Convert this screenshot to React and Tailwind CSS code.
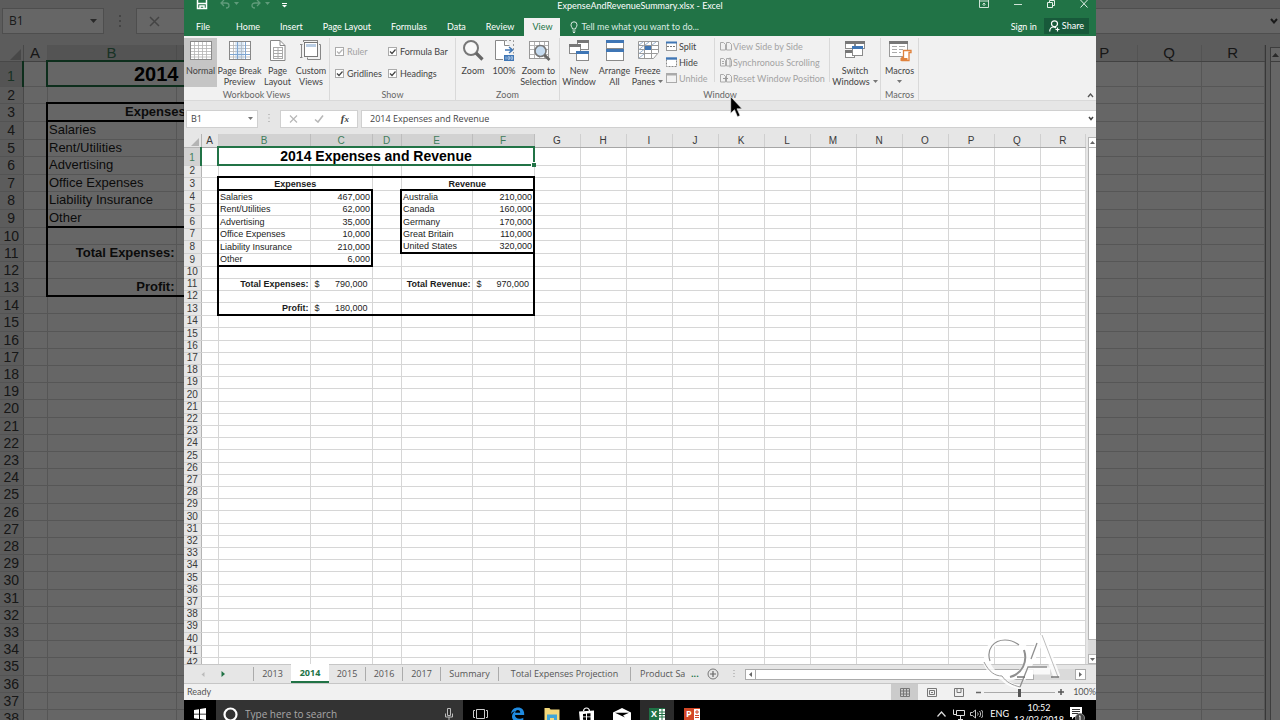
import React from "react";

const SIZES = {
  sm: {
    head: "h-[13px] text-[10px] leading-[11px]",
    corner: "size-2",
    title: "h-[18px] text-[14px] leading-[14px]",
    row: "h-[12px] text-[9px] leading-[10px]",
    tallRow: "h-[13px] text-[9px] leading-[10px]",
    num: "text-[10px]",
  },
  lg: {
    head: "h-[16px] text-[15px] leading-[14px]",
    corner: "size-[11px]",
    title: "h-[25px] text-[20px] leading-[20px]",
    row: "h-[17px] text-[13px] leading-[14px]",
    tallRow: "h-[18px] text-[13px] leading-[14px]",
    num: "text-[14px]",
  },
};

const EXPENSES = [
  ["Salaries", "467,000"],
  ["Rent/Utilities", "62,000"],
  ["Advertising", "35,000"],
  ["Office Expenses", "10,000"],
  ["Liability Insurance", "210,000"],
  ["Other", "6,000"],
];
const REVENUE = [
  ["Australia", "210,000"],
  ["Canada", "160,000"],
  ["Germany", "170,000"],
  ["Great Britain", "110,000"],
  ["United States", "320,000"],
];

const TALL_ROWS = [3, 4, 6, 8, 9, 13];
const isTall = (r) => TALL_ROWS.includes(r) || (r > 13 && r % 5 === 0);

const right = (r, c) => {
  if (c === "A" && r >= 3 && r <= 13) return "border-r-2 border-r-black";
  if (c === "C" && r >= 4 && r <= 9) return "border-r-2 border-r-black";
  if (c === "D" && r >= 4 && r <= 8) return "border-r-2 border-r-black";
  if (c === "F" && r >= 3 && r <= 13) return "border-r-2 border-r-black";
  return "border-r border-r-[#d6d6d6]";
};
const bottom = (r, c) => {
  const inBox = "BCDEF".includes(c);
  if (inBox && (r === 2 || r === 13)) return "border-b-2 border-b-black";
  if (inBox && c !== "D" && r === 3) return "border-b-2 border-b-black";
  if ("BC".includes(c) && r === 9) return "border-b-2 border-b-black";
  if ("EF".includes(c) && r === 8) return "border-b-2 border-b-black";
  return "border-b border-b-[#d6d6d6]";
};

function Money({ value }) {
  return (
    <span className="flex justify-between pl-1 pr-[3px]">
      <span>$</span>
      <span>{value}</span>
    </span>
  );
}

function cellContent(r, c) {
  const i = r - 4;
  if (i >= 0 && i < 6 && c === "B") return EXPENSES[i][0];
  if (i >= 0 && i < 6 && c === "C") return EXPENSES[i][1];
  if (i >= 0 && i < 5 && c === "E") return REVENUE[i][0];
  if (i >= 0 && i < 5 && c === "F") return REVENUE[i][1];
  if (r === 11 && c === "B") return "Total Expenses:";
  if (r === 11 && c === "C") return <Money value="790,000" />;
  if (r === 11 && c === "E") return "Total Revenue:";
  if (r === 11 && c === "F") return <Money value="970,000" />;
  if (r === 13 && c === "B") return "Profit:";
  if (r === 13 && c === "C") return <Money value="180,000" />;
  return null;
}

/* `edge` draws only the columns up to a sliver of C, as cut by the window in front. */
function Sheet({ size, cols, widths, rows, rowNumbers = true, edge = false }) {
  const s = SIZES[size];
  const list = cols.split("");
  return (
    <table className="w-full table-fixed border-collapse font-['Liberation_Sans',Arial,sans-serif] text-[#1c1c1c]">
      <colgroup>
        {widths.map((w, i) => (
          <col key={i} className={w} />
        ))}
      </colgroup>
      <thead>
        <tr className={s.head}>
          {rowNumbers && (
            <th className="border-b border-r border-[#b4b4b4] p-0 align-bottom">
              <svg viewBox="0 0 10 10" className={`mr-[2px] mb-px ml-auto ${s.corner}`}>
                <path d="M10 0V10H0Z" fill="#b4b4b4" />
              </svg>
            </th>
          )}
          {list.map((c) => (
            <th
              key={c}
              className={`border-b border-r p-0 font-normal ${
                "BCDEF".includes(c)
                  ? "border-b-[#217346] border-r-[#bdbdbd] bg-[#d2d2d2] text-[#3f7d5c]"
                  : "border-b-[#a6a6a6] border-r-[#cfcfcf] text-[#3a3a3a]"
              } ${c === "P" && !rowNumbers ? "pr-6" : ""}`}
            >
              {edge && c === "C" ? "" : c}
            </th>
          ))}
        </tr>
      </thead>
      <tbody className="bg-white">
        {Array.from({ length: rows }, (_, k) => k + 1).map((r) => (
          <tr key={r} className={r === 1 ? s.title : isTall(r) ? s.tallRow : s.row}>
            {rowNumbers && (
              <th
                className={`border-b border-b-[#cfcfcf] p-0 text-center font-normal ${s.num} ${
                  r === 1
                    ? "border-r-2 border-r-[#217346] bg-[#d2d2d2] align-bottom text-[#3f7d5c]"
                    : "border-r border-r-[#b4b4b4] bg-[#e6e6e6] text-[#3a3a3a]"
                }`}
              >
                {r}
              </th>
            )}
            {list.map((c) => {
              if (r === 1 && c === "B")
                return edge ? (
                  <td key={c} colSpan={2} className="border-2 border-r-0 border-[#217346] p-0 pr-[5px] text-right font-bold text-black">
                    2014
                  </td>
                ) : (
                  <td key={c} colSpan={5} className="relative border-2 border-[#217346] p-0 text-center font-bold whitespace-nowrap text-black">
                    2014 Expenses and Revenue
                    <span className="absolute -right-[3px] -bottom-[3px] size-[5px] border-t border-l border-white bg-[#217346]" />
                  </td>
                );
              if (r === 1 && "CDEF".includes(c)) return null;
              if (r === 3 && (c === "B" || c === "E"))
                return (
                  <td
                    key={c}
                    colSpan={2}
                    className={`p-0 font-bold ${edge ? "pl-[77px] text-left" : "text-center"} ${right(3, c === "E" ? "F" : "B")} ${bottom(3, c)}`}
                  >
                    {c === "B" ? "Expenses" : "Revenue"}
                  </td>
                );
              if (r === 3 && (c === "C" || c === "F")) return null;
              const total = r > 10;
              const align = total && "BE".includes(c) ? "text-right font-bold pr-px" : "CF".includes(c) ? "text-right pr-px" : "pl-px text-left";
              return (
                <td key={c} className={`p-0 whitespace-nowrap ${align} ${edge && c === "C" ? "" : right(r, c)} ${bottom(r, c)}`}>
                  {edge && c === "C" ? null : cellContent(r, c)}
                </td>
              );
            })}
          </tr>
        ))}
      </tbody>
    </table>
  );
}

/* ---------- icons ---------- */

const Svg = ({ w = 24, h = 22, className = "", children, vb }) => (
  <svg width={w} height={h} viewBox={vb || `0 0 ${w} ${h}`} className={`shrink-0 ${className}`} fill="none" aria-hidden="true">
    {children}
  </svg>
);

const NormalIcon = ({ brk }) => (
  <Svg>
    <rect x="1.5" y="1.5" width="21" height="18" fill="#fff" stroke="#888" />
    <path d="M5.500 2v17M9.500 2v17M13.500 2v17M17.500 2v17M2 5.500h20M2 8.500h20M2 11.500h20M2 14.500h20M2 17h20" stroke="#b4b4b4" strokeWidth="0.800" />
    {brk && (
      <>
        <rect x="7" y="2" width="9" height="17" fill="#9fc0e2" opacity="0.350" />
        <path d="M9.500 2v17M17.500 2v17M2 14.500h20" stroke="#7ea6d2" />
      </>
    )}
  </Svg>
);
const PageLayoutIcon = () => (
  <Svg>
    <path d="M4.500 .5H14l5 5v15h-14.500z" fill="#fff" stroke="#888" />
    <path d="M14 .5v5h5" stroke="#888" />
    <path d="M7 7.500h10M7 10.500h10M7 13.500h10M7 16.500h10M7 18.500h10M7.500 7v12M12 7v12M16.500 7v12" stroke="#aaa" />
  </Svg>
);
const CustomViewsIcon = () => (
  <Svg>
    <path d="M4 .5h14M4.500 0v2M18.500 0v2M2.500 4v14M1 4.500h2.500M1 17.500h2.500M20 4.500h1.500v15h-13v-2" stroke="#888" />
    <rect x="5.500" y="2.500" width="13" height="14" fill="#fff" stroke="#777" />
    <rect x="7" y="4" width="10" height="3" fill="#b9cde4" />
  </Svg>
);
const ZoomIcon = () => (
  <Svg>
    <circle cx="10" cy="8" r="7" fill="#f8f8f8" stroke="#777" strokeWidth="2" />
    <path d="M15 13l6.500 6.500" stroke="#666" strokeWidth="3.200" />
  </Svg>
);
const HundredIcon = () => (
  <Svg>
    <path d="M3.500 .5h9l5 5v11H12v3H3.500z" fill="#fff" />
    <path d="M11 19.500H3.500V.5h9" stroke="#888" />
    <path d="M12.500 .5v5h5" stroke="#888" />
    <path d="M13 .5h8.500v13" stroke="#999" strokeDasharray="2 2" />
    <path d="M13 10h7M17 7l3.500 3-3.500 3" stroke="#3f76b5" strokeWidth="1.500" />
    <rect x="12" y="15" width="10" height="6" fill="#3f76b5" />
    <path d="M14 16.500v3M16 16.700h1.600v2.600H16zM19 16.700h1.600v2.600H19z" stroke="#cfe0f2" strokeWidth="0.700" />
  </Svg>
);
const ZoomSelIcon = () => (
  <Svg>
    <rect x="2.500" y="1.500" width="19" height="17" fill="#fff" stroke="#999" />
    <path d="M7.500 2v16M12.500 2v16M17.500 2v16M3 5.500h18M3 9.500h18M3 14.500h18" stroke="#b4b4b4" />
    <circle cx="13.500" cy="11" r="5.500" fill="#c5dbf0" stroke="#777" strokeWidth="1.600" />
    <path d="M17.500 15l5 5" stroke="#666" strokeWidth="2.600" />
  </Svg>
);
const MiniWin = ({ x, y, w, h, c }) => (
  <>
    <rect x={x + 0.5} y={y + 0.5} width={w} height={h} fill="#fff" stroke="#8a8a8a" />
    <rect x={x} y={y} width={w + 1} height="3" fill={c} />
  </>
);
const NewWindowIcon = () => (
  <Svg>
    <MiniWin x={10} y={0} w={11} h={9} c="#777" />
    <MiniWin x={2} y={4} w={11} h={9} c="#777" />
    <MiniWin x={9} y={11} w={12} h={9} c="#3f76b5" />
  </Svg>
);
const ArrangeIcon = () => (
  <Svg>
    <MiniWin x={3} y={0} w={17} h={8} c="#3f76b5" />
    <MiniWin x={3} y={9} w={17} h={11} c="#3f76b5" />
  </Svg>
);
const FreezeIcon = () => (
  <Svg>
    <path d="M2.500 1.500h20v11l-5 6h-15z" fill="#fff" stroke="#999" />
    <path d="M8.500 1v17M15.500 1v17M3 5.500h19M3 9.500h19M3 13.500h18" stroke="#999" />
    <path d="M3 5l4-3M9 5l4-3M16 5l4-3M3 9.500l5-4M3 13.500l5-4M3 18l5-4" stroke="#9bb3cf" />
    <rect x="9" y="6" width="6" height="4" fill="#3f76b5" />
  </Svg>
);
const SwitchIcon = () => (
  <Svg>
    <MiniWin x={2} y={1} w={9} h={7} c="#777" />
    <MiniWin x={12} y={1} w={9} h={7} c="#777" />
    <MiniWin x={2} y={10} w={9} h={7} c="#777" />
    <MiniWin x={9} y={6} w={10} h={9} c="#3f76b5" />
  </Svg>
);
const MacrosIcon = () => (
  <Svg>
    <rect x="1.500" y="1.500" width="18" height="15" fill="#fff" stroke="#999" />
    <rect x="1" y="1" width="19" height="3" fill="#777" />
    <path d="M4 6.500h5M11 6.500h6M4 9.500h5M11 9.500h4M4 12.500h5M11 12.500h2" stroke="#aaa" />
    <path d="M15.500 10.500h7.500v2h-2v8h-7v-3h1.500z" fill="#fff" stroke="#e0823d" strokeWidth="1.300" />
    <path d="M12.500 18h7v3h-7z" fill="#e0823d" />
  </Svg>
);
const SplitIcon = () => (
  <Svg w={12} h={11}>
    <rect x="0.500" y="1.500" width="10" height="8" fill="#fff" stroke="#999" />
    <path d="M0 1.500h11" stroke="#3f76b5" strokeWidth="2" />
    <path d="M1 5.500h9" stroke="#777" strokeDasharray="2 1" />
  </Svg>
);
const HideIcon = () => (
  <Svg w={12} h={11}>
    <rect x="0.500" y="1.500" width="10" height="8" fill="#fff" stroke="#888" strokeDasharray="2 1" />
    <path d="M0 1.500h11" stroke="#3f76b5" strokeWidth="2.400" />
  </Svg>
);
const UnhideIcon = () => (
  <Svg w={12} h={11}>
    <rect x="0.500" y="0.500" width="10" height="9" fill="#f2f2f2" stroke="#aaa" />
    <path d="M0 1.500h11" stroke="#aaa" strokeWidth="2" />
  </Svg>
);
const PairIcon = ({ kind }) => (
  <Svg w={12} h={11}>
    <path d="M.5 1.500h3l2 2v5.500H.5zM6.500 1.500h3l2 2v5.500h-5z" stroke="#aaa" />
    {kind === "sync" && <path d="M2 4.500h2M2 6.500h2M10 .5v10M8.500 2.500L10 1l1.500 1.500" stroke="#aaa" />}
    {kind === "reset" && <path d="M3 5.500h5M6 3.500v4" stroke="#999" />}
  </Svg>
);
const Caret = ({ className = "" }) => (
  <Svg w={5} h={3} className={className}>
    <path d="M0 0h5L2.500 3z" fill="currentColor" />
  </Svg>
);

/* ---------- ribbon ---------- */

function BigButton({ icon, a, b, width, active, caret }) {
  return (
    <button className={`flex h-[49px] shrink-0 flex-col items-center pt-[2px] whitespace-nowrap ${width} ${active ? "bg-[#c5c5c5]" : ""}`}>
      {icon}
      <span className="mt-[3px] leading-[11px]">{a}</span>
      <span className="flex h-[11px] items-center gap-[3px] leading-[11px]">
        {b}
        {caret && <Caret className="text-[#777]" />}
      </span>
    </button>
  );
}

function Group({ label, children }) {
  return (
    <div className="flex shrink-0 flex-col">
      <div className="flex flex-1">{children}</div>
      <div className="text-center leading-[10px] text-[#666]">{label}</div>
    </div>
  );
}
const Divider = ({ tall = true }) => <div className={`w-px shrink-0 bg-[#d9d9d9] ${tall ? "self-stretch" : "h-11"}`} />;

function Check({ label, disabled }) {
  return (
    <label className={`flex h-[11px] items-center gap-[3px] whitespace-nowrap ${disabled ? "text-[#a3a3a3]" : ""}`}>
      <span className="relative flex">
        <input type="checkbox" defaultChecked disabled={disabled} className="size-[9px] appearance-none border border-[#ababab] bg-white" />
        <Svg w={9} h={9} className="pointer-events-none absolute inset-0">
          <path d="M2 4.500l2 2 3.500-4" stroke={disabled ? "#b5b5b5" : "#444"} strokeWidth="1.200" />
        </Svg>
      </span>
      {label}
    </label>
  );
}

const SmallButton = ({ icon, label, disabled }) => (
  <button disabled={disabled} className={`flex h-[11px] items-center gap-px whitespace-nowrap ${disabled ? "text-[#a3a3a3]" : ""}`}>
    {icon}
    {label}
  </button>
);

function Ribbon() {
  return (
    <div className="flex h-[65px] shrink-0 border-b border-[#d9d9d9] bg-[#f1f1f1] pt-[2px] font-['Lato',sans-serif] text-[9px] text-[#444]">
      <Group label="Workbook Views">
        <BigButton width="w-[33px]" icon={<NormalIcon />} a="Normal" active />
        <BigButton width="w-[45px]" icon={<NormalIcon brk />} a="Page Break" b="Preview" />
        <BigButton width="w-[31px]" icon={<PageLayoutIcon />} a="Page" b="Layout" />
        <BigButton width="w-[36px]" icon={<CustomViewsIcon />} a="Custom" b="Views" />
      </Group>
      <Divider />
      <Group label="Show">
        <div className="flex w-[125px] gap-[6px] pt-2 pl-[5px]">
          <div className="flex flex-col gap-[11px]">
            <Check label="Ruler" disabled />
            <Check label="Gridlines" />
          </div>
          <div className="flex flex-col gap-[11px]">
            <Check label="Formula Bar" />
            <Check label="Headings" />
          </div>
        </div>
      </Group>
      <Divider />
      <Group label="Zoom">
        <BigButton width="w-[34px]" icon={<ZoomIcon />} a="Zoom" />
        <BigButton width="w-[28px]" icon={<HundredIcon />} a="100%" />
        <BigButton width="w-[41px]" icon={<ZoomSelIcon />} a="Zoom to" b="Selection" />
      </Group>
      <Divider />
      <Group label="Window">
        <BigButton width="w-[38px]" icon={<NewWindowIcon />} a="New" b="Window" />
        <BigButton width="w-[33px]" icon={<ArrangeIcon />} a="Arrange" b="All" />
        <BigButton width="w-[33px]" icon={<FreezeIcon />} a="Freeze" b="Panes" caret />
        <div className="flex w-[50px] flex-col gap-[5px] pt-[3px] pl-[2px]">
          <SmallButton icon={<SplitIcon />} label="Split" />
          <SmallButton icon={<HideIcon />} label="Hide" />
          <SmallButton icon={<UnhideIcon />} label="Unhide" disabled />
        </div>
        <Divider tall={false} />
        <div className="flex w-[114px] flex-col gap-[5px] pt-[3px] pl-[5px]">
          <SmallButton icon={<PairIcon />} label="View Side by Side" disabled />
          <SmallButton icon={<PairIcon kind="sync" />} label="Synchronous Scrolling" disabled />
          <SmallButton icon={<PairIcon kind="reset" />} label="Reset Window Position" disabled />
        </div>
        <Divider tall={false} />
        <BigButton width="w-[50px]" icon={<SwitchIcon />} a="Switch" b="Windows" caret />
      </Group>
      <Divider />
      <Group label="Macros">
        <BigButton width="w-[37px]" icon={<MacrosIcon />} a="Macros" caret />
      </Group>
      <Divider />
      <button aria-label="Collapse ribbon" className="mt-auto mr-[2px] mb-[2px] ml-auto">
        <Svg w={7} h={5}>
          <path d="M1 4l2.500-3L6 4" stroke="#555" strokeWidth="1.300" />
        </Svg>
      </button>
    </div>
  );
}

function TitleBar() {
  return (
    <div className="grid h-[18px] shrink-0 grid-cols-[1fr_auto_1fr] items-start overflow-hidden">
      <div className="flex items-start gap-3 pl-3">
        <button aria-label="Save">
          <Svg w={12} h={10}>
            <path d="M1.500 0v8.500h9V0M1 3.500h10M4 8.500V6h4v2.500" stroke="#fff" strokeWidth="1.500" />
          </Svg>
        </button>
        <button aria-label="Undo" className="flex items-start gap-1 text-[#5f9b7a]">
          <Svg w={10} h={9}>
            <path d="M4 0L1 3l3 3M1 3h5c4 0 4 5 0 5" stroke="currentColor" strokeWidth="1.300" />
          </Svg>
          <Caret className="mt-[2px]" />
        </button>
        <button aria-label="Redo" className="flex items-start gap-1 text-[#5f9b7a]">
          <Svg w={10} h={9}>
            <path d="M6 0l3 3-3 3M9 3H4C0 3 0 8 4 8" stroke="currentColor" strokeWidth="1.300" />
          </Svg>
          <Caret className="mt-[2px]" />
        </button>
        <button aria-label="Customize toolbar" className="text-white">
          <Svg w={5} h={8}>
            <path d="M0 3.500h5" stroke="#fff" />
            <path d="M0 5h5L2.500 7.500z" fill="#fff" />
          </Svg>
        </button>
      </div>
      <div className="text-center leading-3">ExpenseAndRevenueSummary.xlsx - Excel</div>
      <div className="flex items-start justify-end gap-[25px] pr-2">
        <button aria-label="Ribbon display options">
          <Svg w={10} h={8}>
            <path d="M.5 0v7.500h9V0M0 1h10M5 6V3M3.500 4.500L5 3l1.500 1.500" stroke="#cfe3d7" />
          </Svg>
        </button>
        <button aria-label="Minimize">
          <Svg w={8} h={8}>
            <path d="M0 4.500h8" stroke="#cfe3d7" />
          </Svg>
        </button>
        <button aria-label="Restore">
          <Svg w={8} h={8}>
            <path d="M.5 2.500h5v5h-5zM2.500 2V.5h5v5H6" stroke="#e4f0e9" />
          </Svg>
        </button>
        <button aria-label="Close">
          <Svg w={8} h={8}>
            <path d="M.5 0l7 7.500M7.500 0l-7 7.500" stroke="#e4f0e9" />
          </Svg>
        </button>
      </div>
    </div>
  );
}

const RIBBON_TABS = ["File", "Home", "Insert", "Page Layout", "Formulas", "Data", "Review", "View"];

function TabBar() {
  return (
    <div className="flex h-[18px] shrink-0 items-stretch">
      {RIBBON_TABS.map((t, i) => (
        <button
          key={t}
          className={
            t === "View"
              ? "bg-[#f1f1f1] px-2 text-[#217346]"
              : i === 0
                ? "pr-4 pl-3 whitespace-nowrap"
                : "px-[10px] whitespace-nowrap"
          }
        >
          {t}
        </button>
      ))}
      <button className="ml-[10px] flex items-center gap-[3px] text-[#dcebe2]">
        <Svg w={8} h={12}>
          <path d="M2.500 8C2.500 6.500 1 6 1 3.800a3 3 0 0 1 6 0C7 6 5.500 6.500 5.500 8zM2.500 10h3M3 11.500h2" stroke="currentColor" />
        </Svg>
        Tell me what you want to do...
      </button>
      <button className="ml-auto pr-[7px]">Sign in</button>
      <button className="mr-[7px] mb-[2px] flex items-center gap-[2px] bg-[#17593a] px-[5px]">
        <Svg w={11} h={12}>
          <circle cx="5.500" cy="3.800" r="3" stroke="#fff" strokeWidth="1.200" />
          <path d="M.7 11.500C.7 8.500 2.500 7 4.500 7c1 0 2 .5 2.500 1M8.500 7.500v4M6.500 9.500h4" stroke="#fff" strokeWidth="1.200" />
        </Svg>
        Share
      </button>
    </div>
  );
}

function FormulaBar() {
  return (
    <div className="flex h-[33px] shrink-0 items-center bg-[#e6e6e6] pt-[2px] pl-[2px] font-['Open_Sans',sans-serif] text-[9px] text-[#444]">
      <div className="flex h-[18px] w-[72px] items-center border border-[#d0d0d0] bg-white pr-1 pl-1 text-[#777]">
        <input aria-label="Name box" defaultValue="B1" className="w-0 flex-1 bg-transparent text-[#444] outline-none" />
        <Caret />
      </div>
      <Svg w={2} h={10} className="mx-[10px]">
        <path d="M1 0v10" stroke="#999" strokeDasharray="1 2.500" />
      </Svg>
      <div className="flex h-[18px] w-[78px] items-center justify-between border border-[#d0d0d0] bg-white pr-2 pl-2">
        <button aria-label="Cancel">
          <Svg w={9} h={8}>
            <path d="M1 .5l7 7M8 .5l-7 7" stroke="#b8b8b8" strokeWidth="1.200" />
          </Svg>
        </button>
        <button aria-label="Enter">
          <Svg w={10} h={8}>
            <path d="M1 4.500L4 7l5-6.500" stroke="#b8b8b8" strokeWidth="1.600" />
          </Svg>
        </button>
        <button aria-label="Insert function" className="font-['Liberation_Serif',serif] text-[11px] leading-3 font-bold italic">
          f<span className="text-[9px]">x</span>
        </button>
      </div>
      <div className="ml-[3px] flex h-[18px] flex-1 items-center border border-r-0 border-[#d0d0d0] bg-white pr-[2px] pl-2">
        <input aria-label="Formula" defaultValue="2014 Expenses and Revenue" className="w-0 flex-1 bg-transparent outline-none" />
        <Svg w={6} h={5}>
          <path d="M1 1l2 2.500L5 1" stroke="#444" strokeWidth="1.500" />
        </Svg>
      </div>
    </div>
  );
}

const MAIN_WIDTHS = [
  "w-[17px]", "w-[17px]", "w-[92px]", "w-[62px]", "w-[29px]", "w-[71px]", "w-[62px]",
  "w-[46px]", "w-[46px]", "w-[46px]", "w-[46px]", "w-[46px]", "w-[46px]", "w-[46px]", "w-[46px]", "w-[46px]", "w-[46px]", "w-[46px]", "",
];

function SheetTabs() {
  const tab = "flex items-center justify-center border-r border-[#ababab] h-[14px] whitespace-nowrap";
  return (
    <div className="flex h-[20px] shrink-0 items-center border-y border-[#c6c6c6] bg-[#e6e6e6] font-['Open_Sans',sans-serif] text-[9px] text-[#555]">
      <div className="flex h-[14px] w-[70px] items-center gap-[16px] border-r border-[#ababab] pl-[17px]">
        <button aria-label="Previous sheets"><Svg w={4} h={5}><path d="M3.500 0v5L0.500 2.500z" fill="#bbb" /></Svg></button>
        <button aria-label="Next sheets"><Svg w={4} h={6}><path d="M.5 0v6L4 3z" fill="#217346" /></Svg></button>
      </div>
      <button className="h-[14px] w-[37px]">2013</button>
      <button className="-mt-px h-[19px] w-[38px] self-start border-b-2 border-[#217346] bg-white font-bold text-[#217346]">2014</button>
      <button className={`${tab} w-[37px]`}>2015</button>
      <button className={`${tab} w-[37px]`}>2016</button>
      <button className={`${tab} w-[38px]`}>2017</button>
      <button className={`${tab} w-[58px]`}>Summary</button>
      <button className={`${tab} w-[132px]`}>Total Expenses Projection</button>
      <button className="ml-[9px] w-[45px] overflow-hidden text-left whitespace-nowrap">Product Sa</button>
      <button className="ml-[6px] font-bold text-[#217346]">...</button>
      <button aria-label="New sheet" className="ml-[8px]">
        <Svg w={12} h={12}>
          <circle cx="6" cy="6" r="5" stroke="#777" />
          <path d="M6 3v6M3 6h6" stroke="#666" strokeWidth="1.200" />
        </Svg>
      </button>
      <Svg w={2} h={9} className="ml-[14px]">
        <path d="M1 0v9" stroke="#999" strokeDasharray="1 2" />
      </Svg>
      <div className="mr-[10px] ml-[10px] flex h-[11px] flex-1 bg-[#dadada]">
        <button aria-label="Scroll left" className="flex w-[11px] items-center justify-center border border-[#ababab] bg-white">
          <Svg w={3} h={5}><path d="M3 0v5L0 2.500z" fill="#666" /></Svg>
        </button>
        <div className="w-[278px] border border-l-0 border-[#ababab] bg-white" />
        <button aria-label="Scroll right" className="ml-auto flex w-[11px] items-center justify-center border border-[#ababab] bg-white">
          <Svg w={3} h={5}><path d="M0 0v5l3-2.500z" fill="#666" /></Svg>
        </button>
      </div>
    </div>
  );
}

function StatusBar() {
  return (
    <div className="flex h-[16px] shrink-0 items-center bg-[#f1f1f1] pl-[3px] font-['Lato',sans-serif] text-[9px] text-[#555]">
      <span>Ready</span>
      <button aria-label="Normal view" className="ml-auto flex h-[16px] w-[27px] items-center justify-center bg-[#cbcbcb]">
        <Svg w={10} h={9}><path d="M.5.500h9v8h-9zM3.500 0v9M6.500 0v9M0 3h10M0 6h10" stroke="#777" /></Svg>
      </button>
      <button aria-label="Page layout view" className="flex w-[27px] justify-center">
        <Svg w={10} h={9}><path d="M.5.500h9v8h-9zM2.500 2.500h5v4h-5zM4 4.500h2" stroke="#777" /></Svg>
      </button>
      <button aria-label="Page break view" className="flex w-[27px] justify-center">
        <Svg w={10} h={9}><path d="M.5.500h9v8h-9zM3 .5v4h4v-4" stroke="#777" /></Svg>
      </button>
      <button aria-label="Zoom out" className="ml-1"><Svg w={5} h={5}><path d="M0 2.500h5" stroke="#666" strokeWidth="1.500" /></Svg></button>
      <input
        type="range"
        aria-label="Zoom level"
        defaultValue="50"
        className="mx-[3px] h-2 w-[71px] appearance-none bg-transparent [&::-webkit-slider-runnable-track]:h-px [&::-webkit-slider-runnable-track]:bg-[#aaa] [&::-webkit-slider-thumb]:-mt-[3px] [&::-webkit-slider-thumb]:h-2 [&::-webkit-slider-thumb]:w-[3px] [&::-webkit-slider-thumb]:appearance-none [&::-webkit-slider-thumb]:bg-[#555]"
      />
      <button aria-label="Zoom in"><Svg w={6} h={6}><path d="M0 3h6M3 0v6" stroke="#555" strokeWidth="1.500" /></Svg></button>
      <span className="pl-[9px] whitespace-nowrap">100%</span>
    </div>
  );
}

function Taskbar() {
  return (
    <div className="h-[20px] shrink-0 overflow-hidden bg-black font-['Open_Sans',sans-serif] text-white">
      <div className="flex h-[28px] items-center">
        <button aria-label="Start" className="flex w-[32px] justify-center">
          <Svg w={12} h={12}>
            <path d="M0 2l5-.8v4.500H0zM6 1l6-1v5.700H6zM0 6.500h5V11l-5-.8zM6 6.500h6V12l-6-1z" fill="#fff" />
          </Svg>
        </button>
        <label className="flex h-full w-[247px] items-center bg-[#333] pl-[7px]">
          <Svg w={15} h={15}><circle cx="7.500" cy="7.500" r="6" stroke="#fff" strokeWidth="2.200" /></Svg>
          <input placeholder="Type here to search" className="ml-[7px] w-0 flex-1 bg-transparent text-[10px] outline-none placeholder:text-[#a8a8a8]" />
          <Svg w={8} h={13} className="mr-[10px]">
            <path d="M2.500.500h3v7h-3zM.5 5.500v3.500h7V5.500M4 9v3.500" stroke="#bbb" />
          </Svg>
        </label>
        <button aria-label="Task view" className="ml-[10px]">
          <Svg w={16} h={12}><path d="M3.500 1.500h8v9h-8zM2 2.500H.5v7H2M13 2.500h1.500v7H13" stroke="#ccc" /></Svg>
        </button>
        <button aria-label="Edge" className="ml-[21px]">
          <Svg w={15} h={15}>
            <path d="M1 7C1.500 2.500 4.500.500 8 .500c4 0 6.500 3 6.200 7.500H5c0 2.500 2 3.800 4.300 3.800 1.600 0 3-.4 4-1v3c-1.300.7-3 1.100-4.800 1.100C4.500 14.900 2 12.500 2 9.500c0-2.500 1.500-4.300 3.500-5.200C3.500 4.500 2 5.500 1 7zm4.200-1.200h5c0-1.700-.8-2.700-2.400-2.700-1.500 0-2.300 1-2.600 2.700z" fill="#1f8ae0" />
          </Svg>
        </button>
        <button aria-label="File Explorer" className="ml-[19px]">
          <Svg w={16} h={14}>
            <path d="M.5 1h5l1 1.500h9V14H.5z" fill="#f3d87a" />
            <path d="M3 14V7.500h10V14h-3v-3H6v3z" fill="#3fa6d8" />
          </Svg>
        </button>
        <button aria-label="Store" className="ml-[19px]">
          <Svg w={16} h={15}>
            <path d="M0 4.500l15-1V15H1z" fill="#fff" />
            <path d="M4.500 4C5 0 10 0 10.500 4" stroke="#fff" strokeWidth="1.200" />
            <path d="M4 7l3-.3v2.800H4zM8 6.600l3.500-.4v3.300H8zM4 10.300h3V13l-3-.3zM8 10.300h3.500v3.200L8 13z" fill="#000" />
          </Svg>
        </button>
        <button aria-label="Mail" className="ml-[18px]">
          <Svg w={18} h={13}>
            <path d="M0 4.500L9 0l9 4.500V13H0z" fill="#fff" />
            <path d="M2 4.800h14l-6 2.800 2 2z" fill="#000" />
          </Svg>
        </button>
        <button aria-label="Excel" className="ml-[9px] flex h-full w-[34px] items-center justify-center bg-[#2b2b2b]">
          <span className="flex h-[13px] w-[16px] items-center bg-[#1e7145] pl-[2px] text-[9px] leading-3 font-bold">
            X
            <Svg w={6} h={11} className="ml-auto"><path d="M0 0h6v11H0z" fill="#fff" /><path d="M0 3h6M0 5.500h6M0 8h6M3 0v11" stroke="#1e7145" /></Svg>
          </span>
        </button>
        <button aria-label="PowerPoint" className="ml-[10px] flex h-[13px] w-[16px] items-center bg-[#d24726] pl-[2px] text-[9px] leading-3 font-bold">
          P
          <Svg w={6} h={11} className="ml-auto"><path d="M0 0h6v11H0z" fill="#fff" /><path d="M1 6.500h4M1 8.500h4M2 2h2v2H2z" stroke="#d24726" /></Svg>
        </button>
        <div className="ml-auto flex items-center font-['Lato',sans-serif] text-[9px]">
          <Svg w={9} h={6}><path d="M.5 5.500l4-4.500 4 4.500" stroke="#ddd" strokeWidth="1.200" /></Svg>
          <Svg w={13} h={11} className="ml-[7px]"><path d="M3.500 1.500h8v5h-8zM.5.500v5h3M7.500 7v3M5 10.500h5" stroke="#ddd" /></Svg>
          <Svg w={13} h={10} className="ml-[4px]"><path d="M.5 3.500h2l3-2.500v8l-3-2.500h-2zM7.500 3.500c.8 1 .8 2 0 3M9.500 2c1.500 2 1.500 4 0 6M11.500 1c2 2.500 2 5.500 0 8" stroke="#ddd" strokeWidth="0.900" /></Svg>
          <span className="ml-[7px] leading-3">ENG</span>
          <span className="w-[60px] text-center text-[9px] leading-3">
            10:52
            <br />
            13/02/2018
          </span>
          <Svg w={18} h={16} className="mr-[9px]">
            <path d="M1 1h12v10H5l-2 2.500V11H1z" fill="#fff" />
            <path d="M3 3.500h8M3 5.500h8M3 7.500h6" stroke="#333" />
            <circle cx="11" cy="12" r="4.500" fill="#444" stroke="#888" />
            <path d="M10 10.500l1-.8v5" stroke="#fff" />
          </Svg>
        </div>
      </div>
    </div>
  );
}

const Watermark = () => (
  <Svg w={78} h={56} className="pointer-events-none absolute right-[36px] bottom-[29px]">
    <g stroke="#fff" opacity="0.850">
      <circle cx="25" cy="23" r="20" strokeWidth="6" />
      <path d="M3 28c4 9 10 14 17 15 5 6 11 8 18 9" strokeWidth="4" />
      <path d="M40 44L60 2l15 40M44 36h24" strokeWidth="7" />
    </g>
    <path d="M8 26C4 14 12 5 23 5c6 0 10 2 14 5" stroke="#8f8f8f" strokeWidth="1.200" />
    <path d="M42 15c4 12-2 24-14 27" stroke="#8f8f8f" strokeWidth="2" />
    <path d="M2 27c5 10 11 14 18 14 4 6 10 9 18 11" stroke="#9c9c9c" />
    <path d="M55 8l-6 16M65 32H46l-8 20" stroke="#8f8f8f" strokeWidth="1.300" />
    <path d="M60 0l16 42" stroke="#b5b5b5" strokeWidth="0.900" />
    <path d="M35 42h8M69 42h8" stroke="#777" strokeWidth="1.500" />
  </Svg>
);

function Window() {
  return (
    <section className="relative flex min-w-0 flex-col overflow-hidden bg-[#e6e6e6]">
      <header className="bg-[#217346] font-['Lato',sans-serif] text-[9px] text-white">
        <TitleBar />
        <TabBar />
      </header>
      <Ribbon />
      <FormulaBar />
      <div className="flex min-h-0 flex-1">
        <div className="min-w-0 flex-1 overflow-hidden">
          <Sheet size="sm" cols="ABCDEFGHIJKLMNOPQR" widths={MAIN_WIDTHS} rows={42} />
        </div>
        <div className="ml-[2px] flex w-2 shrink-0 flex-col pt-[3px]">
          <button aria-label="Scroll up" className="flex h-[11px] items-center justify-center border border-r-0 border-[#b4b4b4] bg-white">
            <Svg w={5} h={3}><path d="M0 3h5L2.500 0z" fill="#666" /></Svg>
          </button>
          <div className="flex-1 border-b border-l border-[#b4b4b4] bg-white" />
          <div className="h-[14px] bg-[#dadada]" />
          <button aria-label="Scroll down" className="flex h-[10px] items-center justify-center border border-r-0 border-[#b4b4b4] bg-white">
            <Caret className="text-[#666]" />
          </button>
        </div>
      </div>
      <SheetTabs />
      <StatusBar />
      <Taskbar />
      <Watermark />

      <Svg w={13} h={22} className="pointer-events-none absolute top-[96px] left-[546px]">
        <path d="M.7.700v16.500l3.800-3.500 3 7 2.500-1.100-3-6.800h5z" fill="#000" stroke="#eee" strokeWidth="0.600" />
      </Svg>
    </section>
  );
}

/* ---------- enlarged, dimmed copy behind the window ---------- */

const Scrim = () => <div className="pointer-events-none absolute inset-0 bg-black/60" />;

function LeftBackdrop() {
  return (
    <aside className="relative flex flex-col overflow-hidden bg-[#e6e6e6]">
      <div className="flex h-[45px] shrink-0 items-start pt-2 pl-[2px]">
        <div className="flex h-[26px] w-[102px] shrink-0 items-center border border-[#c4c4c4] bg-white px-[6px] text-[#666]">
          <input aria-label="Background name box" defaultValue="B1" className="w-0 flex-1 bg-transparent font-['Open_Sans',sans-serif] text-[12px] text-[#444] outline-none" />
          <Svg w={7} h={4}><path d="M0 0h7L3.500 4z" fill="currentColor" /></Svg>
        </div>
        <Svg w={2} h={12} className="mx-[15px] mt-[7px]">
          <path d="M1 0v12" stroke="#999" strokeWidth="1.500" strokeDasharray="2 3" />
        </Svg>
        <div className="flex h-[26px] flex-1 items-center border border-r-0 border-[#c4c4c4] bg-white pl-3">
          <Svg w={11} h={11}><path d="M1 1l9 9M10 1l-9 9" stroke="#aaa" strokeWidth="1.500" /></Svg>
        </div>
      </div>
      <Sheet size="lg" cols="ABC" widths={["w-[23px]", "w-[24px]", "w-[129px]", ""]} rows={38} edge />
      <Scrim />
    </aside>
  );
}

function RightBackdrop() {
  return (
    <aside className="relative flex flex-col overflow-hidden bg-[#e6e6e6]">
      <div className="flex h-[45px] shrink-0 items-start pt-2">
        <div className="flex h-[26px] flex-1 items-center justify-end border-y border-[#c4c4c4] bg-white pr-[2px]">
          <Svg w={8} h={6}><path d="M1 1l3 3.500L7 1" stroke="#444" strokeWidth="2" /></Svg>
        </div>
      </div>
      <div className="flex min-h-0 flex-1">
        <div className="min-w-0 flex-1 overflow-hidden border-r border-[#8c8c8c]">
          <Sheet size="lg" cols="PQR" widths={["w-[41px]", "w-[64px]", ""]} rows={38} rowNumbers={false} />
        </div>
        <div className="ml-1 flex w-[10px] shrink-0 flex-col pt-[2px]">
          <div className="flex h-[15px] items-center justify-center border border-r-0 border-[#999] bg-white">
            <Svg w={7} h={4}><path d="M0 4h7L3.500 0z" fill="#666" /></Svg>
          </div>
          <div className="flex-1 border-l border-[#999] bg-white" />
        </div>
      </div>
      <Scrim />
    </aside>
  );
}

export default function App() {
  return (
    <main className="grid h-screen grid-cols-[23fr_114fr_23fr] overflow-hidden">
      <LeftBackdrop />
      <Window />
      <RightBackdrop />
    </main>
  );
}
